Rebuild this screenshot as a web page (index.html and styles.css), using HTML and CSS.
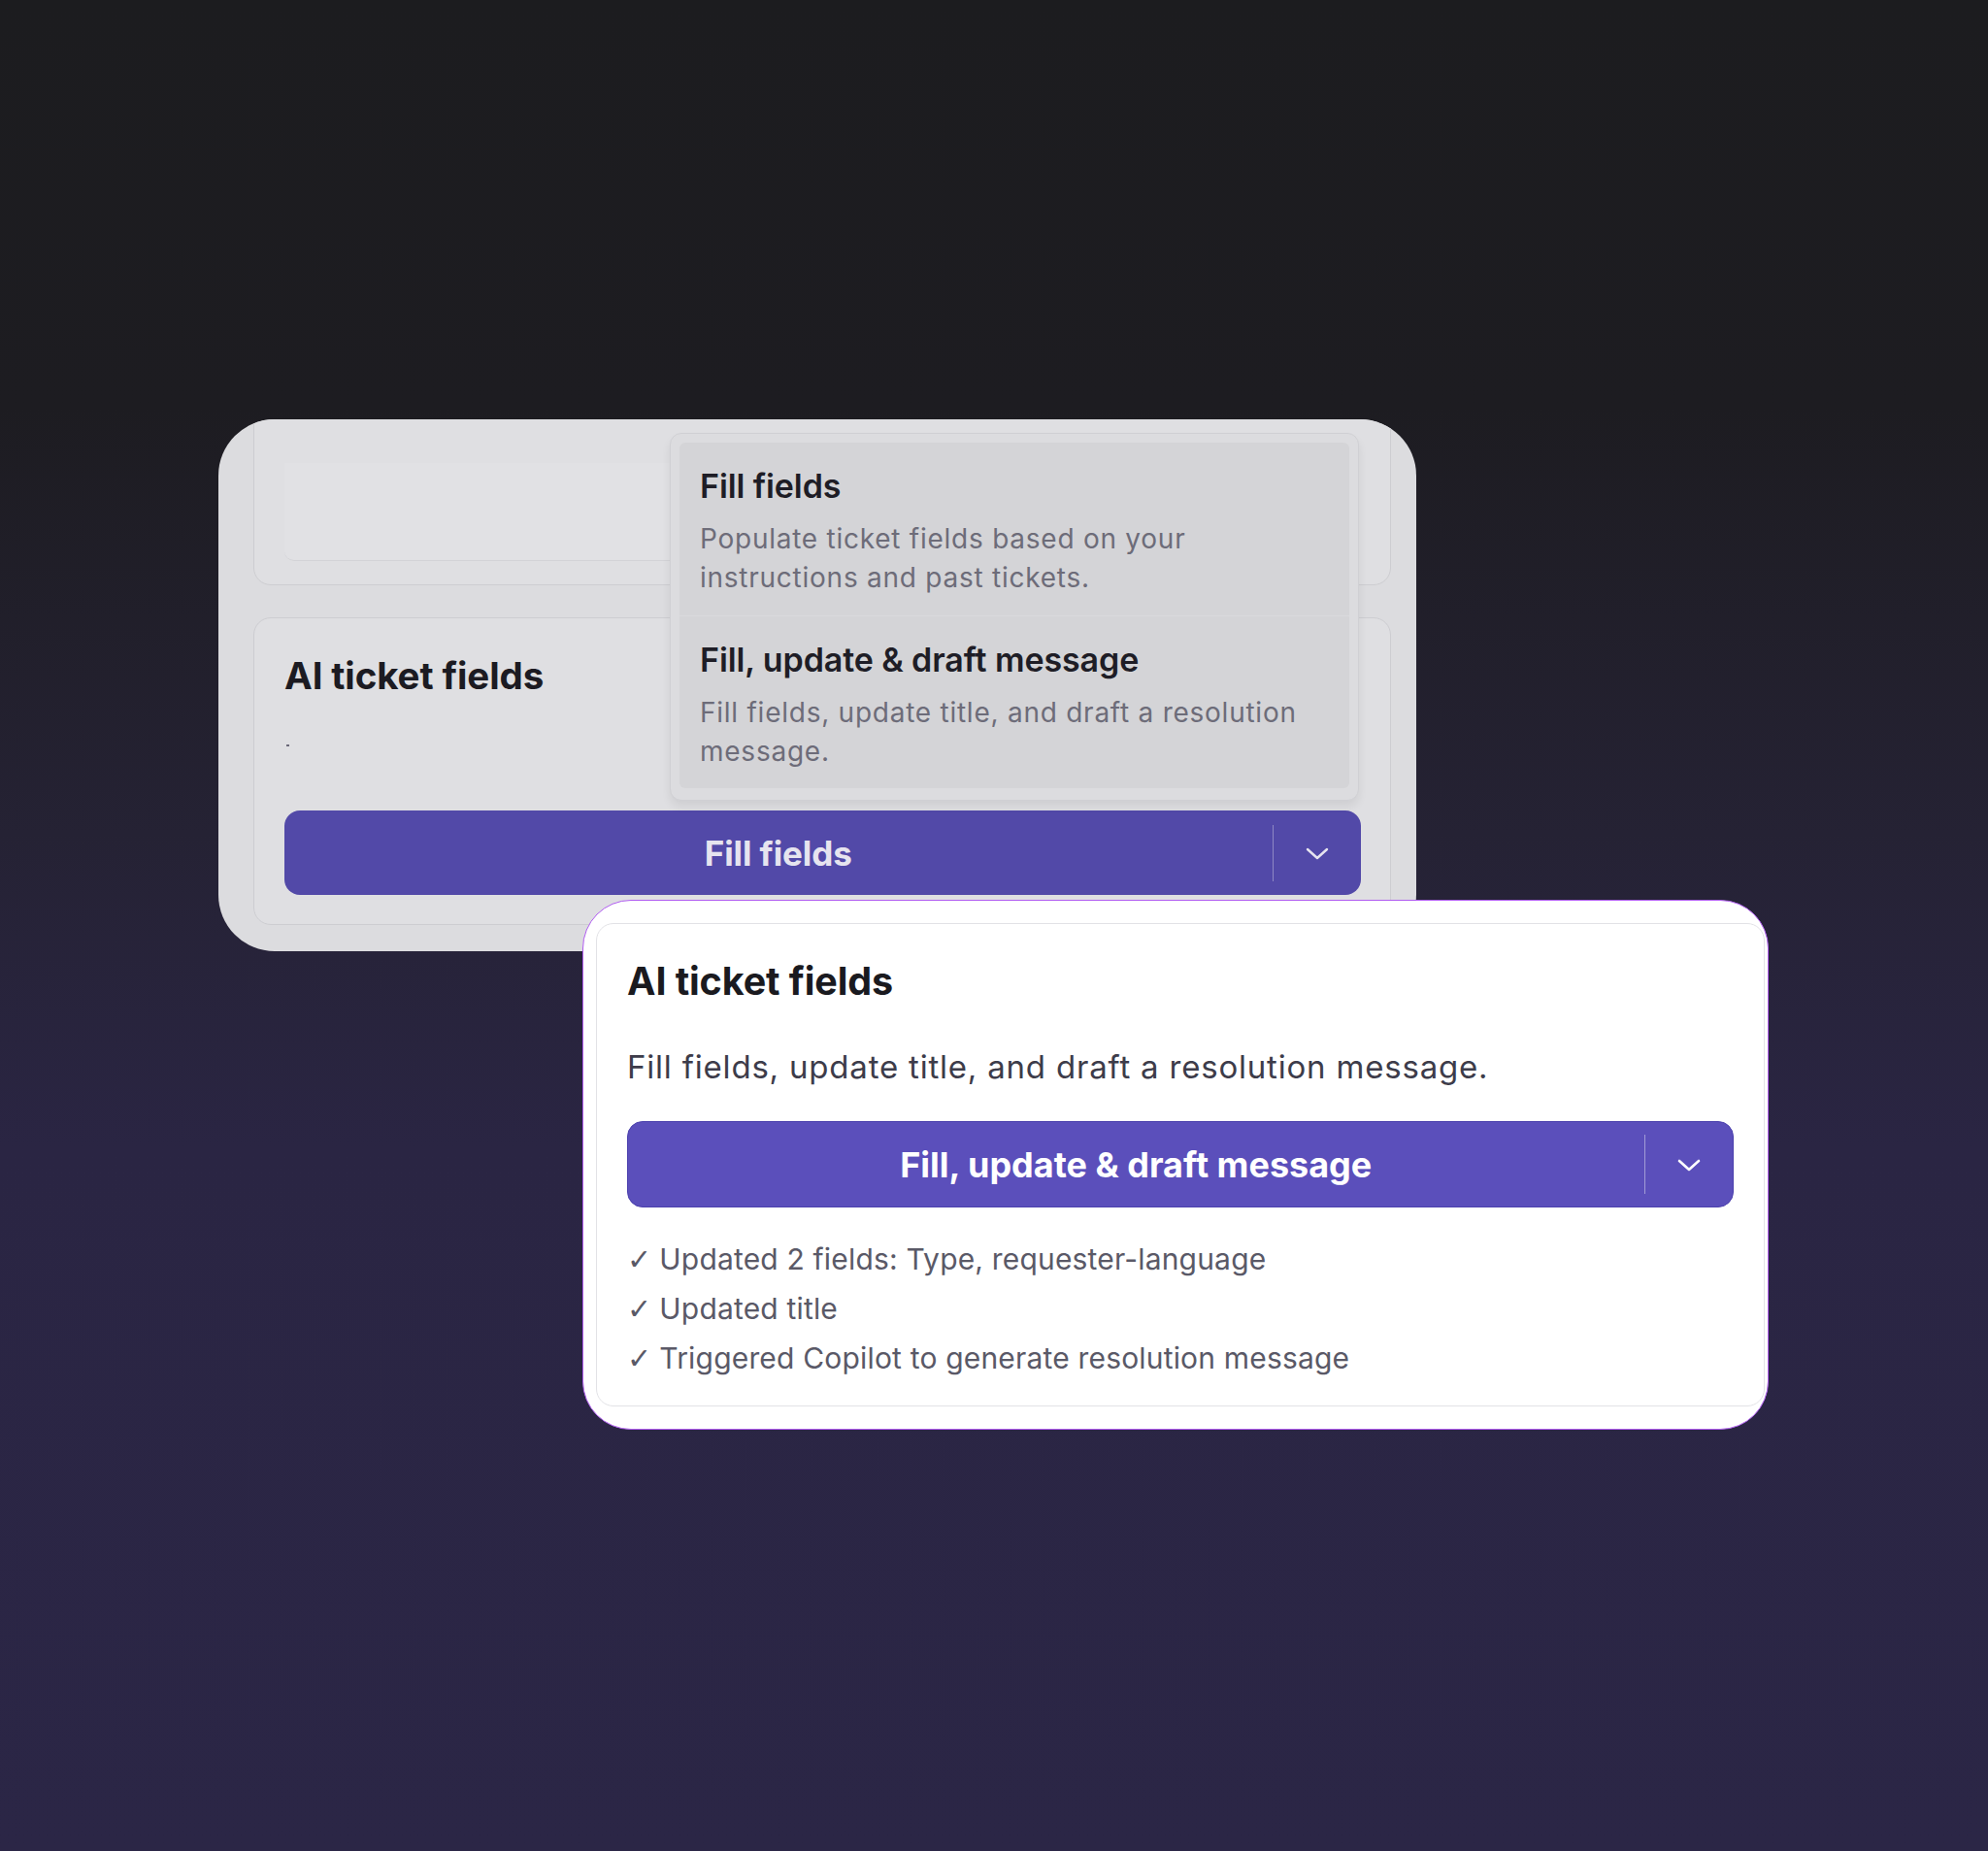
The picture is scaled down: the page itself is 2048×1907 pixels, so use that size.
FILE: index.html
```html
<!DOCTYPE html>
<html lang="en">
<head>
<meta charset="utf-8">
<title>AI ticket fields</title>
<link rel="stylesheet" href="styles.css">
</head>
<body>
<div class="stage">
  <section class="shot shot-back">
    <div class="card card-top">
      <div class="input-ghost"></div>
    </div>
    <div class="card card-bottom">
      <h2 class="title">AI ticket fields</h2>
      <span class="mark"></span>
      <div class="split-btn split-btn-dim">
        <span class="split-label">Fill fields</span>
        <span class="split-div"></span>
        <span class="split-caret">
          <svg width="24" height="13" viewBox="0 0 24 13"><path d="M2 2 L12 11 L22 2" fill="none" stroke="currentColor" stroke-width="2.4" stroke-linecap="round" stroke-linejoin="round"/></svg>
        </span>
      </div>
    </div>
    <div class="menu">
      <div class="menu-item">
        <div class="menu-head">Fill fields</div>
        <div class="menu-desc">Populate ticket fields based on your instructions and past tickets.</div>
      </div>
      <div class="menu-item">
        <div class="menu-head">Fill, update &amp; draft message</div>
        <div class="menu-desc">Fill fields, update title, and draft a resolution message.</div>
      </div>
    </div>
  </section>

  <section class="shot shot-front">
    <div class="fcard">
      <h2 class="ftitle">AI ticket fields</h2>
      <p class="fdesc">Fill fields, update title, and draft a resolution message.</p>
      <div class="split-btn split-btn-main">
        <span class="split-label">Fill, update &amp; draft message</span>
        <span class="split-div"></span>
        <span class="split-caret">
          <svg width="24" height="13" viewBox="0 0 24 13"><path d="M2 2 L12 11 L22 2" fill="none" stroke="currentColor" stroke-width="2.6" stroke-linecap="round" stroke-linejoin="round"/></svg>
        </span>
      </div>
      <ul class="checks">
        <li><span class="tick">✓</span>Updated 2 fields: Type, requester-language</li>
        <li><span class="tick">✓</span>Updated title</li>
        <li><span class="tick">✓</span>Triggered Copilot to generate resolution message</li>
      </ul>
    </div>
  </section>
</div>
</body>
</html>
```

FILE: styles.css
```css
* { box-sizing: border-box; }
html, body { margin: 0; padding: 0; }
body {
  width: 2048px;
  height: 1907px;
  overflow: hidden;
  font-family: Inter, "Noto Sans", "DejaVu Sans", sans-serif;
  background: linear-gradient(180deg, #1c1c1f 0%, #1d1c21 22%, #252234 45%, #2a2543 62%, #2b2646 100%);
}
.stage { position: relative; width: 2048px; height: 1907px; }

/* ---------- back (dimmed) screenshot ---------- */
.shot-back {
  position: absolute;
  left: 225px; top: 432px;
  width: 1234px; height: 548px;
  background: #dcdcdf;
  border-radius: 58px;
  overflow: hidden;
}
.card {
  position: absolute;
  left: 36px; right: 26px;
  background: #dfdfe2;
  border: 1.5px solid #cdcdd1;
  border-radius: 18px;
}
.card-top { top: -40px; height: 211px; }
.input-ghost {
  position: absolute;
  left: 31px; top: 84px;
  width: 440px; height: 101px;
  background: #e1e1e4;
  border-bottom: 1.5px solid #d3d3d7;
  border-radius: 0 0 10px 10px;
}
.card-bottom { top: 204px; height: 317px; padding: 34px 31px 0; }
.title {
  margin: 0;
  font-size: 38.5px;
  line-height: 50px;
  font-weight: 700;
  color: #1c1b22;
  letter-spacing: -0.1px;
}
.mark {
  position: absolute;
  left: 33px; top: 130px;
  width: 3px; height: 2px;
  background: #6a6978;
}
.split-btn {
  display: flex;
  align-items: center;
  color: #fff;
  border-radius: 16px;
}
.split-btn-dim {
  position: absolute;
  left: 31px; right: 30px; top: 198px;
  height: 87px;
  background: #5249a8;
  color: #e6e4ef;
}
.split-label {
  flex: 1;
  text-align: center;
  font-weight: 700;
  font-size: 35px;
  letter-spacing: -0.1px;
}
.split-div {
  width: 1.5px;
  align-self: stretch;
  margin: 15px 0 14px;
  background: #8e88c4;
}
.split-caret {
  width: 90px;
  display: flex;
  justify-content: center;
  align-items: center;
  padding-top: 2px;
}

.menu {
  position: absolute;
  left: 465px; top: 14px;
  width: 710px; height: 379px;
  background: #dcdcdf;
  border: 1.5px solid #d0d0d4;
  border-radius: 12px;
  padding: 9px 9px 12px;
  box-shadow: 0 6px 10px rgba(0,0,0,0.07);
  display: flex;
  flex-direction: column;
}
.menu-item {
  flex: 1;
  background: #d4d4d7;
  padding: 23px 21px 0;
}
.menu-item:first-child { border-radius: 6px 6px 0 0; border-bottom: 1px solid #d9d9dc; }
.menu-item:last-child { border-radius: 0 0 6px 6px; }
.menu-head {
  font-size: 34px;
  line-height: 44px;
  font-weight: 600;
  color: #1e1d26;
  letter-spacing: -0.1px;
}
.menu-desc {
  margin-top: 12px;
  font-size: 28px;
  line-height: 40px;
  letter-spacing: 0.75px;
  color: #6d6c79;
}

/* ---------- front screenshot ---------- */
.shot-front {
  position: absolute;
  left: 600px; top: 927px;
  width: 1222px; height: 546px;
  background: #ffffff;
  border: 1.5px solid #b05cf0;
  border-radius: 50px;
  padding: 23px 3px 23px 13px;
  overflow: hidden;
}
.fcard {
  height: 100%;
  border: 1.5px solid #e2e2e6;
  border-radius: 18px;
  padding: 33px 31px 0;
}
.ftitle {
  margin: 0;
  font-size: 39.5px;
  line-height: 52px;
  font-weight: 700;
  color: #1a1a1f;
  letter-spacing: -0.1px;
}
.fdesc {
  margin: 41px 0 0;
  font-size: 33px;
  line-height: 42px;
  letter-spacing: 0.8px;
  color: #3d3c4a;
}
.split-btn-main {
  margin-top: 35px;
  height: 89px;
  background: #5b4fbb;
  border: 1.5px solid #4b40ad;
}
.split-btn-main .split-label { font-size: 36px; letter-spacing: 0; }
.split-btn-main .split-div { margin: 13px 0 13px; background: #a29cd6; }
.checks {
  list-style: none;
  margin: 28px 0 0;
  padding: 0;
  font-size: 30px;
  line-height: 50px;
  letter-spacing: 0.18px;
  color: #5a5967;
}
.tick {
  font-family: "DejaVu Sans", sans-serif;
  font-size: 30px;
  margin-right: 8px;
  color: #5a5967;
}
```
